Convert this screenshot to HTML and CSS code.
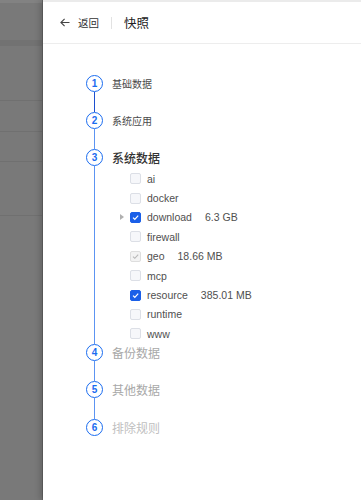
FILE: index.html
```html
<!DOCTYPE html>
<html lang="zh">
<head>
<meta charset="utf-8">
<link rel="stylesheet" href="styles.css">
</head>
<body>
<div class="page">
  <div class="mask">
    <div class="mrow r1"></div>
    <div class="mrow r2"></div>
    <div class="mrow r3"></div>
    <div class="mrow r4"></div>
    <div class="mrow r5"></div>
    <div class="mrow r6"></div>
    <div class="mrow r7"></div>
  </div>
  <div class="drawer">
    <div class="dh">
      <svg class="arrow" width="10" height="9" viewBox="0 0 10 9"><path d="M9.5 4.5H1M4.6 0.8L0.9 4.5l3.7 3.7" fill="none" stroke="#444" stroke-width="1.1"/></svg>
      <span class="back">返回</span>
      <span class="sep"></span>
      <span class="title">快照</span>
    </div>
    <div class="steps">
      <div class="step s37">
        <div class="rail"><span class="dot">1</span><span class="line dark"></span></div>
        <div class="body"><div class="st small">基础数据</div></div>
      </div>
      <div class="step s37">
        <div class="rail"><span class="dot">2</span><span class="line"></span></div>
        <div class="body"><div class="st small">系统应用</div></div>
      </div>
      <div class="step">
        <div class="rail"><span class="dot">3</span><span class="line"></span></div>
        <div class="body">
          <div class="st active">系统数据</div>
          <ul class="list">
            <li class="item"><span class="slot"></span><span class="cb"></span><span class="name">ai</span></li>
            <li class="item"><span class="slot"></span><span class="cb"></span><span class="name">docker</span></li>
            <li class="item"><span class="slot"><svg width="4" height="6" viewBox="0 0 4 6"><path d="M0 0L4 3L0 6Z" fill="#b0b0b0"/></svg></span><span class="cb on"><svg width="9" height="9" viewBox="0 0 9 9"><path d="M2 4.6L3.8 6.3L7.2 2.6" fill="none" stroke="#fff" stroke-width="1.2"/></svg></span><span class="name">download</span><span class="size">6.3 GB</span></li>
            <li class="item"><span class="slot"></span><span class="cb"></span><span class="name">firewall</span></li>
            <li class="item"><span class="slot"></span><span class="cb dis"><svg width="9" height="9" viewBox="0 0 9 9"><path d="M2 4.6L3.8 6.3L7.2 2.6" fill="none" stroke="#b8b8b8" stroke-width="1.1"/></svg></span><span class="name">geo</span><span class="size">18.66 MB</span></li>
            <li class="item"><span class="slot"></span><span class="cb"></span><span class="name">mcp</span></li>
            <li class="item"><span class="slot"></span><span class="cb on"><svg width="9" height="9" viewBox="0 0 9 9"><path d="M2 4.6L3.8 6.3L7.2 2.6" fill="none" stroke="#fff" stroke-width="1.2"/></svg></span><span class="name">resource</span><span class="size">385.01 MB</span></li>
            <li class="item"><span class="slot"></span><span class="cb"></span><span class="name">runtime</span></li>
            <li class="item"><span class="slot"></span><span class="cb"></span><span class="name">www</span></li>
          </ul>
        </div>
      </div>
      <div class="step s38">
        <div class="rail"><span class="dot">4</span><span class="line"></span></div>
        <div class="body"><div class="st wait">备份数据</div></div>
      </div>
      <div class="step s38">
        <div class="rail"><span class="dot">5</span><span class="line"></span></div>
        <div class="body"><div class="st wait">其他数据</div></div>
      </div>
      <div class="step">
        <div class="rail"><span class="dot">6</span></div>
        <div class="body"><div class="st wait light">排除规则</div></div>
      </div>
    </div>
  </div>
</div>
</body>
</html>
```
FILE: styles.css
```css
* { box-sizing: border-box; }
html, body { margin: 0; padding: 0; background: #fff; }
body { font-family: "Liberation Sans", Arial, "Noto Sans CJK SC", sans-serif; }
.page { display: flex; width: 361px; height: 500px; overflow: hidden; }
.mask { width: 43px; flex: none; background: #797979; display: flex; flex-direction: column; }
.mrow { flex: none; }
.r1 { height: 40px; border-top: 3px solid #828282; }
.r2 { height: 6px; background: #727272; }
.r3 { height: 55px; border-bottom: 1px solid #707070; }
.r4 { height: 31px; border-bottom: 1px solid #707070; }
.r5 { height: 30px; border-bottom: 1px solid #707070; }
.r6 { height: 54px; border-bottom: 1px solid #707070; }
.r7 { flex: 1; }
.drawer { flex: 1; background: #fff; border-top: 2px solid #ebebeb; box-shadow: -3px 0 6px rgba(0,0,0,0.18), -1px 0 0 #666; position: relative; }
.dh { height: 42px; border-bottom: 1px solid #ededed; display: flex; align-items: center; padding-left: 17px; }
.arrow { margin-right: 8px; }
.back { font-size: 10.5px; color: #333; font-family: "Noto Sans CJK SC", sans-serif; }
.sep { width: 1px; height: 12px; background: #e2e2e2; margin: 0 12px; }
.title { font-size: 12.5px; color: #222; font-family: "Noto Sans CJK SC", sans-serif; }
.steps { padding: 31px 0 0 43px; display: flex; flex-direction: column; }
.step { display: flex; }
.s37 { height: 37px; }
.s38 { height: 37.6px; }
.rail { width: 17px; flex: none; display: flex; flex-direction: column; align-items: center; }
.dot { width: 17px; height: 17px; flex: none; border: 1.5px solid #1a6cf0; border-radius: 50%; background: #fff; color: #1a6cf0; font-size: 10px; font-weight: bold; display: flex; align-items: center; justify-content: center; }
.line { width: 1px; flex: 1; background: #5c94f2; }
.line.dark { background: #1c4fcf; width: 1.4px; }
.body { margin-left: 9px; flex: 1; }
.st { height: 17px; line-height: 17px; font-family: "Noto Sans CJK SC", sans-serif; }
.st.small { font-size: 10px; color: #4a4a4a; }
.st.active { font-size: 12px; color: #333; font-weight: 500; }
.st.wait { font-size: 12px; color: #a8a8a8; }
.st.wait.light { color: #c0c0c0; }
.list { list-style: none; margin: 3px 0 0; padding: 0 0 0 7px; }
.item { height: 19.4px; display: flex; align-items: center; font-size: 10.5px; color: #4f4f4f; }
.slot { width: 11px; flex: none; display: flex; align-items: center; padding-left: 1px; }
.cb { width: 11px; height: 11px; flex: none; border: 1px solid #dcdfe6; border-radius: 2px; background: #f6f7fa; margin-right: 6px; display: flex; align-items: center; justify-content: center; }
.cb.on { background: #1a5fe8; border-color: #1a5fe8; }
.cb.dis { background: #f3f3f3; border-color: #dedede; }
.size { margin-left: 13px; }
```
